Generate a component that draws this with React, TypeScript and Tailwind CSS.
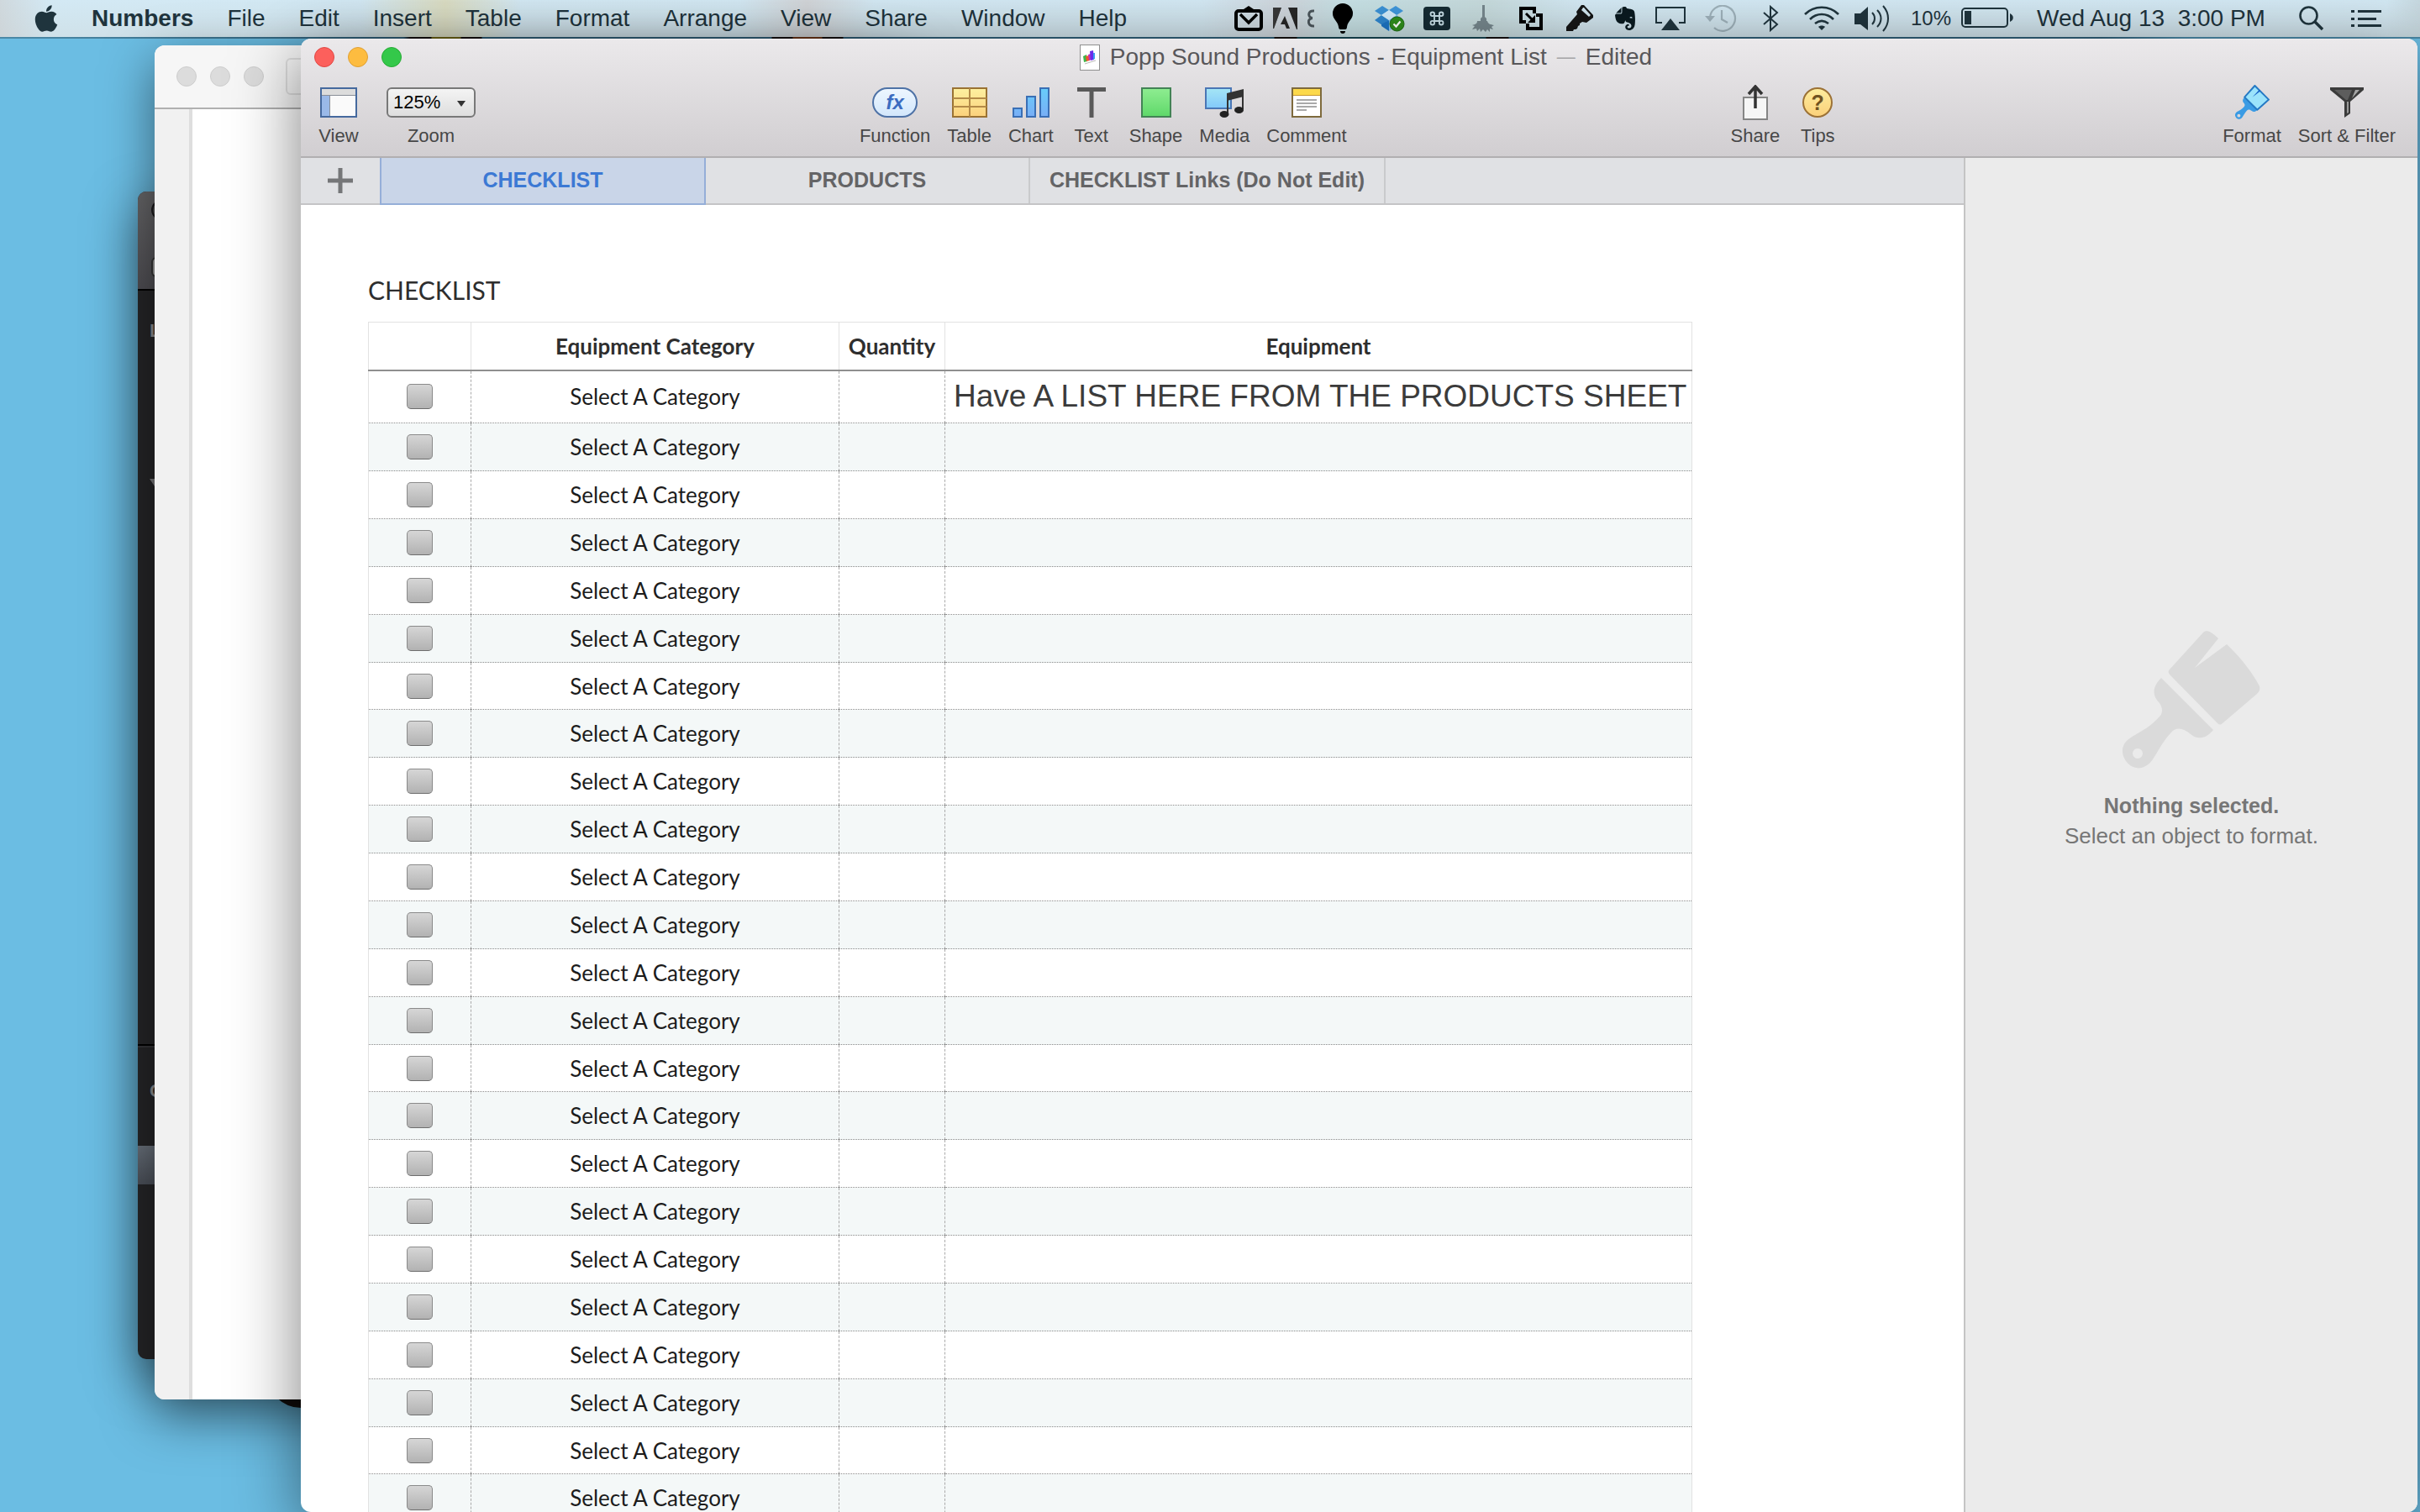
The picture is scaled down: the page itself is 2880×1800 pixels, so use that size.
import type { ReactNode } from "react";
import { FaApple, FaEvernote } from "react-icons/fa";

// ── Data ──

const MENUS = ["File", "Edit", "Insert", "Table", "Format", "Arrange", "View", "Share", "Window", "Help"];

interface ChecklistRow {
  id: number;
  category: string;
  quantity: string;
  equipment: string;
}

const ROWS: ChecklistRow[] = Array.from({ length: 24 }, (_, i) => ({
  id: i + 1,
  category: "Select A Category",
  quantity: "",
  equipment: i === 0 ? "Have A LIST HERE FROM THE PRODUCTS SHEET" : "",
}));

// ── Menu bar ──

function StatusItem({ wide = false, children }: { wide?: boolean; children: ReactNode }) {
  return (
    <span className={`flex h-full items-center justify-center ${wide ? "w-15" : "w-14"}`}>
      {children}
    </span>
  );
}

function StatusIcons() {
  return (
    <div className="flex h-full items-center" aria-hidden>
      <span className="flex w-12 justify-center">
        <svg width="34" height="30" viewBox="0 0 34 30" fill="none">
          <rect x="2" y="6" width="30" height="22" rx="3" stroke="#000" strokeWidth="4" />
          <path d="M11 4 17 0l6 4z" fill="#000" />
          <path d="m7 10 10 10 10-10" stroke="#000" strokeWidth="3.400" />
        </svg>
      </span>
      <span className="flex w-10 justify-center">
        <svg width="29" height="26" viewBox="0 0 29 26">
          <path d="M0 0h10L1 25H0zM18 0h11v26h-1zM14 10l6 15h-4l-2-5h-5z" fill="#272727" />
          <path d="M0 0h10L1 25H0z" fill="#4a4a4a" opacity=".5" />
        </svg>
      </span>
      <span className="flex w-5 justify-center">
        <svg width="8" height="22" viewBox="0 0 8 22" fill="none">
          <path d="M8 2C0 1 0 10 6 10.500M6 10.500C-1 11 0 21 8 20" stroke="#4b555b" strokeWidth="3" />
        </svg>
      </span>
      <StatusItem>
        <svg width="24" height="36" viewBox="0 0 24 36">
          <path d="M12 0a12 12 0 0 1 12 12c0 7-6 9-7 16 0 2-1 3-2 3H9c-1 0-2-1-2-3C6 21 0 19 0 12A12 12 0 0 1 12 0z" />
          <path d="M9 33h6c0 2-1 3-3 3s-3-1-3-3z" />
        </svg>
      </StatusItem>
      <StatusItem>
        <svg width="36" height="32" viewBox="0 0 36 32">
          <path d="M9 1 17 6 8 12 0 7z" fill="#3c92d6" />
          <path d="M25 1 17 6l9 6 8-5z" fill="#3f97dc" />
          <path d="m0 18 8-6 9 6-8 6z" fill="#2f86ce" />
          <path d="m34 18-8-6-9 6 9 6z" fill="#5fadeb" />
          <path d="m8 12 9-6 9 6-9 6z" fill="#d4ecfb" />
          <path d="M8 25v-2l9-5v13z" fill="#1d74c4" />
          <path d="m26 25-9 6V18l9 6z" fill="#8ac5f1" />
          <circle cx="26.500" cy="22.500" r="8.500" fill="#2f8f1c" stroke="#1d6b10" />
          <path d="m22.500 22.500 3 3 5-6" fill="none" stroke="#fff" strokeWidth="2.200" />
        </svg>
      </StatusItem>
      <StatusItem>
        <svg width="32" height="28" viewBox="0 0 32 28" fill="none">
          <rect width="32" height="28" rx="4" fill="#152b33" />
          <g stroke="#c9e0e8" strokeWidth="1.800">
            <path d="M13 11h6v6h-6z" />
            <circle cx="10.800" cy="8.800" r="2.300" />
            <circle cx="21.200" cy="8.800" r="2.300" />
            <circle cx="10.800" cy="19.200" r="2.300" />
            <circle cx="21.200" cy="19.200" r="2.300" />
          </g>
        </svg>
      </StatusItem>
      <StatusItem>
        <svg width="27" height="32" viewBox="0 0 27 32" fill="#76878d">
          <path d="M12 0h3v14l2 2v3h-7v-3l2-2z" />
          <path d="M9 19h9c1 4 4 4 8 5l-3 2 2 3-4-1v4l-3-3-2 3-3-3-3 3-1-4-3 3-1-3-5 1 3-4-3-1c4-1 6-2 6-5z" />
        </svg>
      </StatusItem>
      <StatusItem>
        <svg width="28" height="28" viewBox="0 0 28 28" fill="none" stroke="#000" strokeWidth="4">
          <path d="M8 18H2V2h16v6" />
          <path d="M20 10h6v16H10v-6" />
          <path d="m8 8 8 8" strokeWidth="3" />
          <path d="M19 10v9h-9z" fill="#000" stroke="none" />
        </svg>
      </StatusItem>
      <StatusItem wide>
        <svg width="32" height="32" viewBox="0 0 32 32">
          <path
            fillRule="evenodd"
            d="M18 0h3l11 12v3l-8 6-5-1-3 2v2l-2 1-1 3-2 1-2 0-1 2H0v-5l13-15-1-3zM20 3l-2 3 9 8 2-2-8-9z"
            fill="#161616"
          />
        </svg>
      </StatusItem>
      <span className="flex w-12 justify-center">
        <FaEvernote className="size-8 text-[#0a1a20]" />
      </span>
      <StatusItem wide>
        <svg width="36" height="28" viewBox="0 0 36 28">
          <path d="M8 19H1V1h34v18h-7" fill="none" stroke="#20353e" strokeWidth="2" />
          <path d="m18 14 11 14H7z" fill="#20353e" />
        </svg>
      </StatusItem>
      <StatusItem wide>
        <svg width="38" height="32" viewBox="0 0 38 32" fill="none" stroke="#9fb2bb" strokeWidth="2.200">
          <path d="M6 15a15 15 0 1 1 5 12" />
          <path d="M20 6v11l7 4" />
          <path d="M0 13h12l-6 7z" fill="#9fb2bb" stroke="none" />
        </svg>
      </StatusItem>
      <StatusItem wide>
        <svg width="20" height="32" viewBox="0 0 20 32" fill="none" stroke="#20353e" strokeWidth="2">
          <path d="m1 9 16 14-8 7V2l8 7L1 23" />
        </svg>
      </StatusItem>
      <StatusItem wide>
        <svg width="42" height="30" viewBox="0 0 42 30" fill="none" stroke="#20353e" strokeWidth="2.600">
          <path d="M1 10c11-11 29-11 40 0" />
          <path d="M7 16c8-8 20-8 28 0" />
          <path d="M13 21c5-4 11-4 16 0" />
          <path d="m21 29-4-4c2-2 6-2 8 0z" fill="#20353e" stroke="none" />
        </svg>
      </StatusItem>
      <StatusItem wide>
        <svg width="42" height="32" viewBox="0 0 42 32" fill="none" stroke="#20353e" strokeWidth="2">
          <path d="M0 10h7l9-8v28l-9-7H0z" fill="#20353e" stroke="none" />
          <path d="M21 9c4 4 4 10 0 14M27 6c6 6 6 14 0 20M34 1c8 9 8 21 0 30" />
        </svg>
      </StatusItem>
    </div>
  );
}

function MenuBar() {
  return (
    <header className="flex h-11 shrink-0 items-center bg-[linear-gradient(90deg,rgba(205,205,205,0.6)_0,transparent_60px,transparent_430px,rgba(220,220,190,0.9)_530px,transparent_620px,transparent_880px,rgba(210,205,205,0.7)_960px,transparent_1040px,transparent_1430px,rgba(205,205,210,0.7)_1530px,rgba(190,220,220,0.6)_1600px,rgba(195,215,215,0.8)_1770px,transparent_1880px,transparent_2840px,rgba(190,205,210,0.6)_2880px),linear-gradient(#d3e9f4,#cfe1e9)] pr-[46px] pl-[41px] text-[28px] leading-9 whitespace-nowrap text-[#1f343d]">
      <button type="button" aria-label="Apple menu">
        <FaApple className="h-9 w-7" />
      </button>
      <nav className="ml-10 flex gap-10">
        <button type="button" className="font-bold">
          Numbers
        </button>
        {MENUS.map((menu) => (
          <button key={menu} type="button">
            {menu}
          </button>
        ))}
      </nav>
      <div className="ml-auto flex h-full items-center">
        <StatusIcons />
        <span className="ml-4 text-2xl">10%</span>
        <svg className="ml-3" width="62" height="26" viewBox="0 0 62 26" aria-hidden>
          <rect x="1" y="1" width="54" height="22" rx="4" fill="none" stroke="#20353e" strokeWidth="2" />
          <rect x="4" y="4" width="8" height="16" fill="#20353e" />
          <path d="M58 7c5 2 5 8 0 10z" fill="#20353e" />
        </svg>
        <span className="ml-5 w-[288px] text-center whitespace-pre">Wed Aug 13  3:00 PM</span>
        <button type="button" aria-label="Spotlight" className="ml-8">
          <svg width="30" height="30" viewBox="0 0 30 30" fill="none" stroke="#20353e">
            <circle cx="11.500" cy="11.500" r="10" strokeWidth="2.600" />
            <path d="m19 19 9 9" strokeWidth="3.400" />
          </svg>
        </button>
        <button type="button" aria-label="Notification Center" className="ml-8">
          <svg width="36" height="22" viewBox="0 0 36 22" fill="#20353e">
            <path d="M0 1h4v3H0zM0 10h4v3H0zM0 18h4v3H0zM8 1h28v3H8zM8 10h22v3H8zM8 18h28v3H8z" />
          </svg>
        </button>
      </div>
    </header>
  );
}

// ── Background windows ──

function BackgroundWindows() {
  return (
    <>
      <div className="absolute top-[1550px] left-[318px] size-20 rounded-full bg-[#181412]" />

      <div className="absolute top-[182px] left-[164px] h-[1390px] w-[300px] overflow-hidden rounded-[10px] bg-[#252527] shadow-[0_20px_60px_rgba(0,0,0,0.5)]">
        <div className="flex h-[118px] flex-col justify-between border-b-2 border-black bg-linear-to-b from-[#676769] to-[#4f4e53] pt-2.5 pb-3.5 pl-4">
          <span className="size-6 rounded-full border-2 border-[#1c1c1e] bg-[#4c4c4e]" />
          <span className="h-6 w-12 rounded-md border-2 border-[#333] bg-[#9a9a9a]" />
        </div>
        <p className="mt-8 pl-3.5 text-[22px] leading-8 font-bold text-[#8c8c8e]">L</p>
        <svg className="mt-40 ml-3.5" width="16" height="12" viewBox="0 0 16 12" aria-hidden>
          <path d="M0 0h16l-8 12z" fill="#77777a" />
        </svg>
        <div className="mt-[661px] h-1 border-t-2 border-b-2 border-t-black border-b-[#333336]" />
        <p className="mt-9 pl-3.5 text-[22px] leading-8 font-bold text-[#8c8c8e]">C</p>
        <div className="mt-[49px] h-[46px] bg-linear-to-b from-[#69717b] to-[#4b5059]" />
      </div>

      <div className="absolute top-2 left-[184px] flex h-[1612px] w-[900px] flex-col overflow-hidden rounded-xl bg-white shadow-[0_20px_60px_rgba(0,0,0,0.5)]">
        <div className="flex h-[76px] shrink-0 items-center gap-4 border-b-2 border-[#b0b0b0] bg-[#f6f6f6] pl-[26px]">
          <span className="size-6 rounded-full border border-[#cdcdcd] bg-[#dcdcdc]" />
          <span className="size-6 rounded-full border border-[#cdcdcd] bg-[#dcdcdc]" />
          <span className="size-6 rounded-full border border-[#cdcdcd] bg-[#dcdcdc]" />
          <span className="ml-2.5 h-11 w-20 rounded-md border-2 border-[#dedede]" />
        </div>
        <div className="w-[45px] flex-1 border-r-4 border-[#dedede] bg-[#f1f1f1]" />
      </div>
    </>
  );
}

// ── Toolbar ──

interface ToolProps {
  label: string;
  children: ReactNode;
}

function Tool({ label, children }: ToolProps) {
  return (
    <button type="button" className="flex min-w-[50px] flex-col items-center gap-2.5">
      <span className="flex h-9 items-center justify-center">{children}</span>
      <span>{label}</span>
    </button>
  );
}

function BrushShape() {
  return (
    <>
      <path d="M56 46 96 2c3-3 8-3 18 7L86 44l38-28c18 17 32 36 39 50 1 3 0 6-3 9l-41 35c-2 2-4 2-6 0L57 53c-3-3-3-5-1-7z" />
      <path
        fillRule="evenodd"
        d="m46 56 62 62c-10 12-20 11-27 5-9-8-18-9-24-1-10 11-15 22-21 31-10 14-24 13-32 2-6-9-5-17 0-23 8-9 24-12 40-30 4-4 4-10 0-16-8-8-10-18 2-30zM18 140a6 6 0 1 0 0 12 6 6 0 0 0 0-12z"
      />
    </>
  );
}

function Toolbar() {
  return (
    <div className="flex justify-between pt-3.5 pr-[26px] pb-3 pl-5 text-[22px] leading-6 text-[#474747]">
      <div className="flex gap-8">
        <Tool label="View">
          <svg width="44" height="36" viewBox="0 0 44 36" aria-hidden>
            <rect x="1" y="1" width="42" height="34" fill="#fafafa" />
            <path d="M1 1h42v8H1z" fill="#dcdcdc" />
            <path d="M1 10h10v25H1z" fill="#9ab9e8" />
            <path d="M1 9.500h42M11.500 10v25" stroke="#8a8f98" strokeWidth="1" />
            <rect x="1" y="1" width="42" height="34" fill="none" stroke="#45699e" strokeWidth="2" />
          </svg>
        </Tool>
        <label className="flex flex-col items-center gap-2.5">
          <span className="relative">
            <select
              defaultValue="125%"
              className="block h-9 w-[106px] appearance-none rounded-md border-2 border-[#787878] bg-linear-to-b from-[#f4f4f4] to-[#dedede] pl-1.5 leading-8 text-black"
            >
              <option>100%</option>
              <option>125%</option>
              <option>150%</option>
            </select>
            <svg
              className="pointer-events-none absolute top-4 right-3"
              width="10"
              height="7"
              viewBox="0 0 10 7"
              aria-hidden
            >
              <path d="M0 0h10L5 7z" fill="#333" />
            </svg>
          </span>
          <span>Zoom</span>
        </label>
      </div>

      <div className="flex gap-5">
        <Tool label="Function">
          <span className="flex h-9 w-[54px] items-center justify-center rounded-full border-2 border-[#4e72a6] bg-linear-to-b from-[#edf6ff] to-[#d3e7fb] text-2xl leading-6 font-bold text-[#3c6cc0] italic">
            fx
          </span>
        </Tool>
        <Tool label="Table">
          <svg width="42" height="36" viewBox="0 0 42 36" aria-hidden>
            <defs>
              <linearGradient id="tableFill" x2="0" y2="1">
                <stop stopColor="#fdf0a0" />
                <stop offset="1" stopColor="#fbd17c" />
              </linearGradient>
            </defs>
            <rect x="1" y="1" width="40" height="34" fill="url(#tableFill)" stroke="#9a7233" strokeWidth="2" />
            <path d="M1 13h40M1 23h40M21 1v34" stroke="#b38a48" strokeWidth="2" />
          </svg>
        </Tool>
        <Tool label="Chart">
          <svg width="44" height="36" viewBox="0 0 44 36" aria-hidden>
            <defs>
              <linearGradient id="barFill" x2="0" y2="1">
                <stop stopColor="#67cdfb" />
                <stop offset="1" stopColor="#79aef6" />
              </linearGradient>
            </defs>
            <g fill="url(#barFill)" stroke="#3a6fb5" strokeWidth="2">
              <path d="M1 25h10v10H1zM17 11h10v24H17zM33 1h10v34H33z" />
            </g>
          </svg>
        </Tool>
        <Tool label="Text">
          <svg width="34" height="36" viewBox="0 0 34 36" aria-hidden>
            <path d="M0 0h34v5H0zM14.500 5h5v31h-5z" fill="#595959" />
          </svg>
        </Tool>
        <Tool label="Shape">
          <span className="size-9 border-2 border-[#438355] bg-linear-to-b from-[#8dec90] to-[#5fd96a]" />
        </Tool>
        <Tool label="Media">
          <svg width="46" height="36" viewBox="0 0 46 36" aria-hidden>
            <defs>
              <linearGradient id="mediaFill" x2="0" y2="1">
                <stop stopColor="#a5e6f5" />
                <stop offset="1" stopColor="#82c8fa" />
              </linearGradient>
            </defs>
            <rect x="1" y="1" width="30" height="24" fill="url(#mediaFill)" stroke="#4a76b5" strokeWidth="2" />
            <path d="m26 7 20-5v9l-20 5z" fill="#333" />
            <path d="M27 9v22M45 5v21" stroke="#333" strokeWidth="2" />
            <ellipse cx="23" cy="32" rx="5.500" ry="4" fill="#222" />
            <ellipse cx="40.500" cy="27" rx="5.500" ry="4" fill="#222" />
          </svg>
        </Tool>
        <Tool label="Comment">
          <svg width="36" height="36" viewBox="0 0 36 36" aria-hidden>
            <rect x="1" y="1" width="34" height="34" fill="#fff" />
            <path d="M1 1h34v8H1z" fill="#fcd94b" />
            <path d="M1 9.500h34" stroke="#c99a2e" />
            <path d="M6 15h24M6 19h24M6 23h24M6 27h12" stroke="#a9a9a9" strokeWidth="2" />
            <rect x="1" y="1" width="34" height="34" fill="none" stroke="#7e6a3c" strokeWidth="2" />
          </svg>
        </Tool>
      </div>

      <div className="flex gap-5">
        <Tool label="Share">
          <svg width="30" height="42" viewBox="0 0 30 42" aria-hidden>
            <rect x="1" y="15" width="28" height="26" fill="#f6f6f6" stroke="#858585" strokeWidth="2" />
            <path d="M15 2v26M7 11l8-9 8 9" fill="none" stroke="#333" strokeWidth="3.500" />
          </svg>
        </Tool>
        <Tool label="Tips">
          <span className="flex size-9 items-center justify-center rounded-full border-2 border-[#9c7236] bg-linear-to-b from-[#fdec9c] to-[#fbd17b] text-[25px] leading-8 font-bold text-[#6f5220]">
            ?
          </span>
        </Tool>
      </div>

      <div className="flex gap-5">
        <Tool label="Format">
          <svg width="42" height="42" viewBox="-4 -4 172 172" aria-hidden>
            <path d="m46 56 50-56 68 68-56 50z" fill="#9be3fb" />
            <g fill="#3a9be4">
              <path
                fillRule="evenodd"
                d="m46 56 62 62c-10 12-20 11-27 5-9-8-18-9-24-1-10 11-15 22-21 31-10 14-24 13-32 2-6-9-5-17 0-23 8-9 24-12 40-30 4-4 4-10 0-16-8-8-10-18 2-30zM18 138a8 8 0 1 0 0 16 8 8 0 0 0 0-16z"
              />
            </g>
            <path d="m46 56 50-56 68 68-56 50z" fill="none" stroke="#2579c4" strokeWidth="8" strokeLinejoin="round" />
            <path d="m84 56 34-36 6 6z" fill="#1763c7" />
          </svg>
        </Tool>
        <Tool label="Sort &amp; Filter">
          <svg width="40" height="36" viewBox="0 0 40 36" aria-hidden>
            <path d="M0 0h40v3L24 17v14l-7 5V17L0 3z" fill="#3b3b3b" />
            <path d="m5 3 14 12h2L26 3z" fill="#5d5d5d" />
            <path d="m26 13 9-10h-5z" fill="#a5a5a5" />
            <path d="M20 17h2v13l-2 1z" fill="#9a9a9a" />
          </svg>
        </Tool>
      </div>
    </div>
  );
}

function TitleBar() {
  return (
    <header className="shrink-0 border-b-2 border-[#b1afb1] bg-linear-to-b from-[#ebe9eb] to-[#d1ced1]">
      <div className="grid h-11 grid-cols-[1fr_auto_1fr] items-center pl-4">
        <div className="flex gap-4">
          <button type="button" aria-label="Close" className="size-6 rounded-full border border-[#df4744] bg-[#fc605c]" />
          <button type="button" aria-label="Minimize" className="size-6 rounded-full border border-[#de9f34] bg-[#fdbc40]" />
          <button type="button" aria-label="Zoom window" className="size-6 rounded-full border border-[#27aa35] bg-[#34c84a]" />
        </div>
        <h1 className="flex items-center text-[28px] leading-8 whitespace-nowrap text-[#58575a]">
          <svg className="mr-3" width="24" height="31" viewBox="0 0 24 31" aria-hidden>
            <rect x=".5" y=".5" width="23" height="30" fill="#fff" stroke="#8f8f8f" />
            <path d="m4 14 4-2 1 8-4 1z" fill="#3fb54a" />
            <path d="m7 14 4-1 1 6-4 1z" fill="#f0592a" />
            <path d="m10 12 3-1 1 7-3 1z" fill="#c22cc4" />
            <path d="m12 8 4-1 1 11-4 1z" fill="#6b2bea" />
            <path d="m16 10 2 0v7l-2 1z" fill="#3a9bf0" />
            <path d="m6 23 13-4" stroke="#b9b9b9" />
          </svg>
          Popp Sound Productions - Equipment List
          <span className="mx-3 text-[22px] text-[#a5a4a6]">—</span>
          Edited
        </h1>
      </div>
      <Toolbar />
    </header>
  );
}

// ── Sheet ──

function SheetTabs() {
  return (
    <nav className="flex h-14 shrink-0 border-b-2 border-[#c4c4c6] bg-[#e0e1e4] text-[25px] font-bold whitespace-nowrap text-[#646466]">
      <button type="button" aria-label="Add sheet" className="flex w-[94px] items-center justify-center">
        <svg width="30" height="30" viewBox="0 0 30 30" aria-hidden>
          <path d="M12.500 0h5v12.500H30v5H17.500V30h-5V17.500H0v-5h12.500z" fill="#757678" />
        </svg>
      </button>
      <button type="button" className="-mb-0.5 w-[388px] border-2 border-t-0 border-[#95aed8] bg-[#c9d5e8] text-[#3c79d4]">
        CHECKLIST
      </button>
      <button type="button" className="w-[386px] border-r-2 border-[#c9cacc]">
        PRODUCTS
      </button>
      <button type="button" className="w-[423px] border-r-2 border-[#c9cacc]">
        CHECKLIST Links (Do Not Edit)
      </button>
    </nav>
  );
}

function ChecklistTable() {
  return (
    <table className="mt-5 w-[1576px] table-fixed border-collapse border border-[#e2e2e2] font-['Lato',sans-serif] text-[26px] leading-8 text-[#1c1c1c]">
      <colgroup>
        <col className="w-[122px]" />
        <col className="w-[438px]" />
        <col className="w-[126px]" />
        <col />
      </colgroup>
      <thead>
        <tr className="h-[57px] border-b-2 border-[#8f8f8f] text-[#2e2e2e]">
          <th className="border-r border-r-[#e2e2e2]" aria-label="Done" />
          <th className="border-r border-r-[#e2e2e2] font-bold">Equipment Category</th>
          <th className="border-r border-r-[#e2e2e2] font-bold">Quantity</th>
          <th className="font-bold">Equipment</th>
        </tr>
      </thead>
      <tbody>
        {ROWS.map((row) => (
          <tr
            key={row.id}
            className="h-[57px] border-b border-dotted border-b-[#8a8a8a] first:h-[63px] even:bg-[#f4f8f8] nth-[8n+7]:h-[56px]"
          >
            <td className="border-r border-dashed border-r-[#aaaaaa] p-0">
              <input
                type="checkbox"
                aria-label={`Row ${row.id} done`}
                className="mx-auto block h-[30px] w-[31px] appearance-none rounded-[5px] border border-[#8a8a8a] border-b-[#6e6e6e] bg-linear-to-b from-[#d6d6d6] to-[#b2b2b2]"
              />
            </td>
            <td className="border-r border-dashed border-r-[#aaaaaa] p-0 text-center">{row.category}</td>
            <td className="border-r border-dashed border-r-[#aaaaaa] p-0">{row.quantity}</td>
            <td className="p-0 pl-2.5 font-['Liberation_Sans',Arial,sans-serif] text-[37px] whitespace-nowrap text-[#3b3b3b]">
              {row.equipment}
            </td>
          </tr>
        ))}
      </tbody>
    </table>
  );
}

function FormatPanel() {
  return (
    <aside className="flex w-[540px] shrink-0 flex-col items-center border-l-2 border-[#c4c4c4] bg-[#ebebeb] pt-[563px] leading-9 text-[#767676]">
      <svg width="164" height="164" viewBox="0 0 164 164" fill="#dadada" aria-hidden>
        <BrushShape />
      </svg>
      <p className="mt-[26px] text-[25px] leading-9 font-bold">Nothing selected.</p>
      <p className="text-[26px] leading-9">Select an object to format.</p>
    </aside>
  );
}

function NumbersWindow() {
  return (
    <main className="absolute top-0 right-[3px] bottom-0 left-[358px] flex flex-col overflow-hidden rounded-xl bg-white shadow-[0_20px_80px_rgba(0,0,0,0.5)]">
      <TitleBar />
      <div className="flex min-h-0 flex-1">
        <section className="flex min-w-0 flex-1 flex-col">
          <SheetTabs />
          <div className="min-h-0 flex-1 overflow-hidden pt-[83px] pl-20">
            <h2 className="font-['Lato',sans-serif] text-[30px] leading-9 text-[#2e2e2e]">CHECKLIST</h2>
            <ChecklistTable />
          </div>
        </section>
        <FormatPanel />
      </div>
    </main>
  );
}

export default function App() {
  return (
    <div className="flex h-screen flex-col overflow-hidden bg-[#6bbde3] font-['Liberation_Sans',Arial,sans-serif]">
      <MenuBar />
      <div className="h-0.5 shrink-0 bg-[linear-gradient(90deg,#4b8aa8_0,#2f5f78_480px,#141010_488px,#141010_513px,#6e6416_514px,#6e6416_548px,#141010_549px,#141010_573px,#2f5f78_574px,#2f5f78_918px,#141010_919px,#141010_943px,#6b3517_944px,#6b3517_978px,#141010_979px,#141010_1003px,#2f5f78_1004px,#2f5f78_1516px,#141010_1517px,#141010_1543px,#164552_1544px,#164552_1768px,#141010_1769px,#141010_1795px,#2f5f78_1796px,#2f5f78_2500px,#4b8aa8_2600px)]" />
      <div className="relative flex-1">
        <BackgroundWindows />
        <NumbersWindow />
      </div>
    </div>
  );
}
